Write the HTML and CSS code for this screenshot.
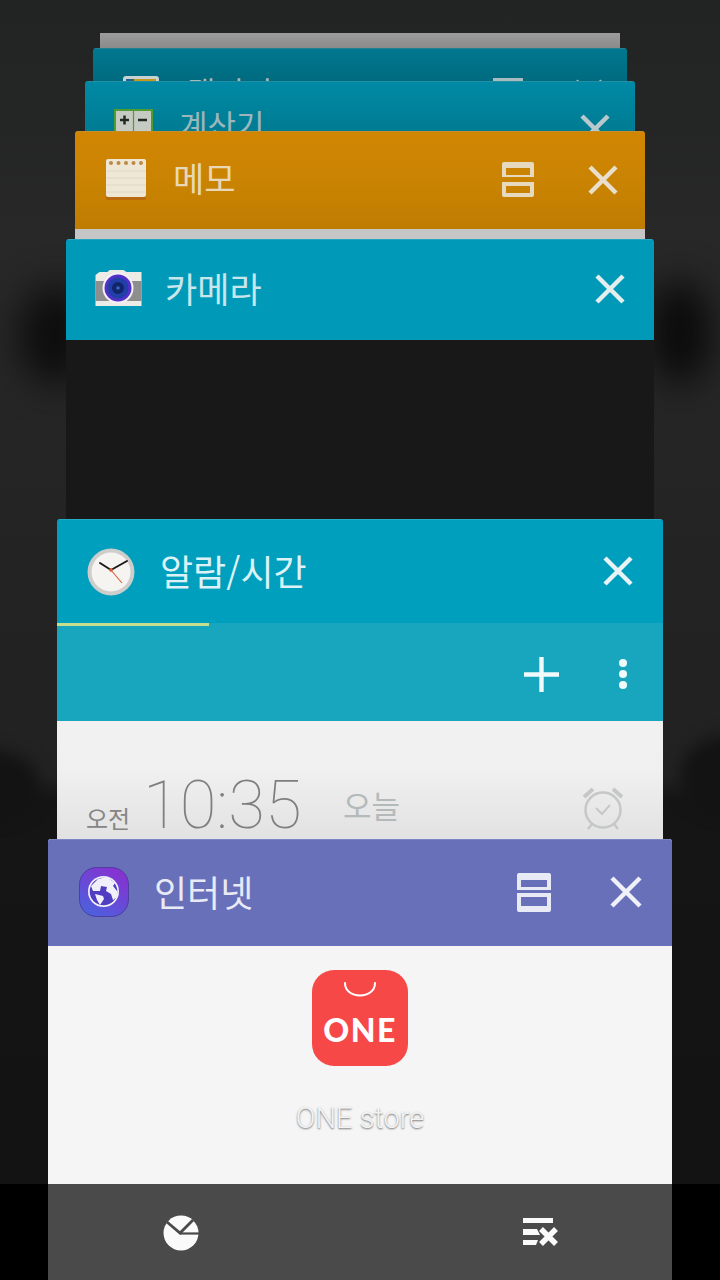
FILE: index.html
```html
<!DOCTYPE html>
<html lang="ko">
<head>
<meta charset="utf-8">
<title>최근 앱</title>
<link rel="stylesheet" href="styles.css">
</head>
<body>
<div class="screen">
  <div class="wallpaper"><div class="blob blob-a"></div><div class="blob blob-b"></div><div class="blob blob-c"></div><div class="blob blob-d"></div></div>

  <section class="card card-0"></section>

  <section class="card card-1">
    <header class="head head-1">
      <svg class="ic-gallery" viewBox="0 0 38 38"><rect x="1" y="1" width="36" height="36" rx="3" fill="#c9d2d2"/><rect x="4" y="4" width="30" height="30" fill="#c39a1a"/><rect x="4" y="4" width="8" height="8" fill="#24608c"/></svg>
      <span class="title title-1">갤러리</span>
      <span class="split-stub"></span>
      <svg class="ic-x x-1" viewBox="0 0 30 30"><path d="M2 2L28 28M28 2L2 28" stroke="#a8bcc0" stroke-width="4.500"/></svg>
    </header>
  </section>

  <section class="card card-2">
    <header class="head head-2">
      <svg class="ic-calc" viewBox="0 0 39 40"><rect x="1" y="1" width="37" height="38" fill="#c5cbc2" stroke="#4f9c33" stroke-width="2"/><path d="M19.500 1V39" stroke="#4f9c33" stroke-width="1.200"/><path d="M6 11H15M10.500 6.500V15.500M24 11H33" stroke="#1f2a22" stroke-width="2.500"/></svg>
      <span class="title title-2">계산기</span>
      <svg class="ic-x x-2" viewBox="0 0 30 30"><path d="M2 2L28 28M28 2L2 28" stroke="#b8c8cc" stroke-width="4.500"/></svg>
    </header>
  </section>

  <section class="card card-3">
    <header class="head head-3">
      <svg class="ic-memo" viewBox="0 0 42 42"><rect x="1" y="2" width="40" height="40" rx="2" fill="#b9690f"/><rect x="1" y="1" width="40" height="38" rx="2" fill="#efe7d5"/><g fill="#bd8a45"><circle cx="6" cy="5" r="2"/><circle cx="13.500" cy="5" r="2"/><circle cx="21" cy="5" r="2"/><circle cx="28.500" cy="5" r="2"/><circle cx="36" cy="5" r="2"/></g><path d="M1 13H41M1 20H41M1 27H41M1 34H41" stroke="#e0d8c4" stroke-width="1"/></svg>
      <span class="title title-3">메모</span>
      <svg class="ic-split split-3" viewBox="0 0 32 36"><path fill-rule="evenodd" fill="#e6d9be" d="M2 0H30Q32 0 32 2V15H0V2Q0 0 2 0ZM4 6V13H28V6ZM0 20H32V33Q32 35 30 35H2Q0 35 0 33ZM4 24V31H28V24Z"/></svg>
      <svg class="ic-x x-3" viewBox="0 0 30 30"><path d="M2 2L28 28M28 2L2 28" stroke="#e8dfcc" stroke-width="4.500"/></svg>
    </header>
    <div class="strip"></div>
  </section>

  <section class="card card-4">
    <header class="head head-4">
      <svg class="ic-camera" viewBox="0 0 46 37"><path d="M0 5L4 2H12L14 0H28L31 2H46V36H0Z" fill="#ecebe6"/><rect x="0" y="11" width="46" height="20" fill="#8e8e8e"/><circle cx="22.500" cy="18" r="15.500" fill="#f3f1f7"/><circle cx="22.500" cy="18" r="13.500" fill="#5230c8"/><circle cx="22.500" cy="18" r="10.500" fill="#2040a8"/><circle cx="22.500" cy="18" r="6" fill="#12246a"/><circle cx="22.500" cy="18" r="1.800" fill="#3a64c8"/></svg>
      <span class="title title-4">카메라</span>
      <svg class="ic-x x-4" viewBox="0 0 30 30"><path d="M2 2L28 28M28 2L2 28" stroke="#e4eeef" stroke-width="4.500"/></svg>
    </header>
  </section>

  <section class="card card-5">
    <header class="head head-5">
      <svg class="ic-clock" viewBox="0 0 48 48"><circle cx="24" cy="24" r="23.500" fill="#cdcdcb"/><circle cx="24" cy="24" r="19.500" fill="#f6f4f0"/><path d="M24 22L13 15M24 22L40 13" stroke="#1b1b1b" stroke-width="2" stroke-linecap="round"/><path d="M23 21L35 35" stroke="#dc5a30" stroke-width="1.100"/><circle cx="24" cy="22" r="1.800" fill="#dc5a30"/></svg>
      <span class="title title-5">알람/시간</span>
      <svg class="ic-x x-5" viewBox="0 0 30 30"><path d="M2 2L28 28M28 2L2 28" stroke="#e9f3f5" stroke-width="4.500"/></svg>
    </header>
    <div class="tabs">
      <span class="tab-line"></span>
      <svg class="ic-plus" viewBox="0 0 36 36"><path d="M18 0V36M0 18H36" stroke="#f1fafb" stroke-width="4.500"/></svg>
      <span class="dots"><i></i><i></i><i></i></span>
    </div>
    <div class="alarm">
      <span class="ampm">오전</span>
      <span class="time">10:35</span>
      <span class="day">오늘</span>
      <svg class="ic-alarm" viewBox="0 0 40 44"><circle cx="20" cy="24" r="17.500" fill="none" stroke="#c6c8c8" stroke-width="2.500"/><path d="M13 24L19 30L27 21" transform="translate(0 -2)" fill="none" stroke="#c6c8c8" stroke-width="2"/><path d="M1 11L10 3M39 11L30 3" stroke="#c6c8c8" stroke-width="4"/><path d="M9 38L5 43M31 38L35 43" stroke="#c6c8c8" stroke-width="2.500"/></svg>
    </div>
  </section>

  <section class="card card-6">
    <header class="head head-6">
      <svg class="ic-net" viewBox="0 0 50 50">
        <defs><linearGradient id="netbg" x1="0.800" y1="0" x2="0.200" y2="1"><stop offset="0" stop-color="#8a2fd0"/><stop offset="1" stop-color="#4a62de"/></linearGradient></defs>
        <rect x="0.500" y="0.500" width="49" height="49" rx="17" fill="url(#netbg)" stroke="#4c3fa0"/>
        <circle cx="24.500" cy="24.500" r="15.500" fill="#f1f0fa"/>
        <circle cx="24.500" cy="24.500" r="13.800" fill="#4f3fc0"/>
        <path fill="#f1f0fa" d="M12 19L19 12L28 10L36 16L34 19L38 24L38 30L34 33L32 27L27 24L28 20L22 19L21 24L14 24ZM16 27L24 29L25 32L21 38L18 33Z"/>
      </svg>
      <span class="title title-6">인터넷</span>
      <svg class="ic-split split-6" viewBox="0 0 34 39"><path fill-rule="evenodd" fill="#e8eaf6" d="M2 0H32Q34 0 34 2V17H0V2Q0 0 2 0ZM4 7V14H30V7ZM0 20H34V37Q34 39 32 39H2Q0 39 0 37ZM4 24V33H30V24Z"/></svg>
      <svg class="ic-x x-6" viewBox="0 0 32 32"><path d="M2 2L30 30M30 2L2 30" stroke="#f0f0f8" stroke-width="4.500"/></svg>
    </header>
    <div class="loading">
      <div class="one-icon">
        <svg class="one-handle" viewBox="0 0 34 15"><path d="M2 1C2 9 9 13.500 17 13.500C25 13.500 32 9 32 1" fill="none" stroke="#fff" stroke-width="2" stroke-linecap="round"/></svg>
        <span class="one-word">ONE</span>
      </div>
      <p class="one-name">ONE store</p>
    </div>
  </section>

  <footer class="bar">
    <div class="bar-inner">
      <svg class="ic-pie" viewBox="0 0 36 36"><circle cx="18" cy="18" r="17.500" fill="#fafafa"/><path d="M4 7L17 18L30 5" fill="none" stroke="#4a4a4a" stroke-width="2.800"/><path d="M17 18.500H36" stroke="#4a4a4a" stroke-width="2.200"/></svg>
      <svg class="ic-clear" viewBox="0 0 36 28"><path fill="#fafafa" d="M0 0H30V5H0ZM0 11H14L17 17H0ZM0 22H15L13 27H0Z"/><path d="M18 11L33 26M33 11L18 26" stroke="#fafafa" stroke-width="5.500"/></svg>
    </div>
  </footer>
</div>
</body>
</html>
```

FILE: styles.css
```css
* { box-sizing: border-box; margin: 0; padding: 0; }
html, body { width: 720px; height: 1280px; overflow: hidden; background: #000; }
body { font-family: "Noto Sans CJK KR", "Noto Sans", sans-serif; }

.screen { position: relative; width: 720px; height: 1280px; overflow: hidden; background: #242525; }

.wallpaper { position: absolute; inset: 0; overflow: hidden; background: linear-gradient(#222323 0, #282828 260px, #232323 560px, #222 775px, #151515 800px, #131313 1184px); }
.blob { position: absolute; filter: blur(18px); border-radius: 50%; }
.blob-a { left: 20px; top: 285px; width: 70px; height: 100px; background: #0d0d0d; }
.blob-b { left: 650px; top: 280px; width: 60px; height: 105px; background: #0a0a0a; }
.blob-c { left: -60px; top: 750px; width: 100px; height: 70px; background: #131313; filter: blur(8px); }
.blob-d { left: 680px; top: 735px; width: 100px; height: 80px; background: #131313; filter: blur(8px); }

.card { position: absolute; display: flex; flex-direction: column; overflow: hidden; border-radius: 3px 3px 0 0; }
.card-0 { left: 100px; top: 33px; width: 520px; height: 20px; background: linear-gradient(#9c9c9c, #858585); border-radius: 0; }
.card-1 { left: 93px; top: 48px; width: 534px; height: 40px; }
.card-2 { left: 85px; top: 81px; width: 550px; height: 55px; }
.card-3 { left: 75px; top: 131px; width: 570px; height: 112px; }
.card-4 { left: 66px; top: 239px; width: 588px; height: 284px; background: #181818; }
.card-5 { left: 57px; top: 519px; width: 606px; height: 324px; }
.card-6 { left: 48px; top: 839px; width: 624px; height: 345px; background: #f5f5f5; }

.head { position: relative; flex: none; display: flex; align-items: center; border-top: 1px solid rgba(255, 255, 255, .14); }
.head-1 { height: 33px; background: linear-gradient(#00788f, #006a80); }
.head-2 { height: 50px; background: linear-gradient(#0089a5, #007c93); }
.head-3 { height: 98px; background: linear-gradient(#d18603, #c98302 55%, #bf7c02); }
.head-4 { height: 101px; background: #0099b8; }
.head-5 { height: 104px; background: #009fbd; }
.head-6 { height: 107px; background: #6870ba; }

.title { position: absolute; font-weight: 400; white-space: nowrap; line-height: 1; }
.title-1 { left: 94px; top: 26px; font-size: 31px; color: #a8bcc0; }
.title-2 { left: 94px; top: 26px; font-size: 31px; color: #9cb6bb; }
.title-3 { left: 98px; top: 29px; font-size: 34px; color: #e9d8b8; }
.title-4 { left: 99px; top: 30px; font-size: 35px; color: #c8e6ec; }
.title-5 { left: 103px; top: 32px; font-size: 36px; color: #dcf2f6; }
.title-6 { left: 106px; top: 33px; font-size: 36px; color: #e8eaf6; }

.ic-gallery { position: absolute; left: 29px; top: 26px; width: 38px; height: 38px; }
.split-stub { position: absolute; left: 400px; top: 29px; width: 30px; height: 4px; background: #a8bcc0; }
.x-1 { left: 481px; top: 30px; width: 30px; height: 30px; }
.ic-calc { position: absolute; left: 29px; top: 27px; width: 39px; height: 40px; }
.ic-memo { position: absolute; left: 30px; top: 26px; width: 42px; height: 42px; }
.ic-camera { position: absolute; left: 29px; top: 30px; width: 47px; height: 37px; }
.ic-clock { position: absolute; left: 30px; top: 28px; width: 48px; height: 48px; }
.ic-net { position: absolute; left: 31px; top: 27px; width: 50px; height: 50px; }

.ic-x { position: absolute; }
.x-2 { left: 495px; top: 32px; width: 30px; height: 30px; }
.x-3 { left: 513px; top: 33px; width: 30px; height: 30px; }
.x-4 { left: 529px; top: 34px; width: 30px; height: 30px; }
.x-5 { left: 546px; top: 36px; width: 30px; height: 30px; }
.x-6 { left: 562px; top: 36px; width: 32px; height: 32px; }
.ic-split { position: absolute; }
.split-3 { left: 427px; top: 30px; width: 32px; height: 36px; }
.split-6 { left: 469px; top: 33px; width: 34px; height: 39px; }

.strip { flex: none; height: 10px; background: #c6c6c6; }

.tabs { position: relative; flex: none; height: 98px; background: #18a6bf; }
.tab-line { position: absolute; left: 0; top: 0; width: 152px; height: 3px; background: #c4e08f; }
.ic-plus { position: absolute; left: 467px; top: 34px; width: 35px; height: 35px; }
.dots { position: absolute; left: 562px; top: 36px; display: flex; flex-direction: column; gap: 3px; }
.dots i { display: block; width: 8px; height: 8px; border-radius: 50%; background: #f1fafb; }

.alarm { position: relative; flex: 1; background: linear-gradient(#f1f1f1, #f0f0f0 40%, #e1e1e1); }
.ampm { position: absolute; left: 29px; top: 85px; font-size: 24px; font-weight: 400; line-height: 1; color: #858585; }
.time { position: absolute; left: 86px; top: 51px; font-family: "Roboto", sans-serif; font-weight: 100; font-size: 67px; line-height: 67px; color: #7f7f7f; }
.day { position: absolute; left: 286px; top: 68px; font-size: 31px; font-weight: 400; line-height: 1; color: #b4baba; }
.ic-alarm { position: absolute; left: 526px; top: 65px; width: 40px; height: 44px; }

.loading { flex: 1; display: flex; flex-direction: column; align-items: center; padding-top: 24px; }
.one-icon { position: relative; width: 96px; height: 96px; border-radius: 22px; background: #f74848; display: flex; justify-content: center; }
.one-handle { position: absolute; left: 31px; top: 12px; width: 34px; height: 15px; }
.one-word { position: absolute; left: 0; right: 0; top: 44px; text-align: center; font-family: "Lato", sans-serif; font-weight: 900; font-size: 32px; line-height: 1; letter-spacing: 1.500px; color: #fff; }
.one-name { margin-top: 36px; font-family: "Roboto", sans-serif; font-weight: 300; font-size: 29px; line-height: 32px; color: #f3f3f3; text-shadow: 0 1px 2px #6e6e6e; }

.bar { position: absolute; left: 0; top: 1184px; width: 720px; height: 96px; padding: 0 48px; background: #000; }
.bar-inner { position: relative; height: 96px; background: #4a4a4a; }
.ic-pie { position: absolute; left: 115px; top: 31px; width: 36px; height: 36px; }
.ic-clear { position: absolute; left: 475px; top: 34px; width: 36px; height: 28px; }
```
